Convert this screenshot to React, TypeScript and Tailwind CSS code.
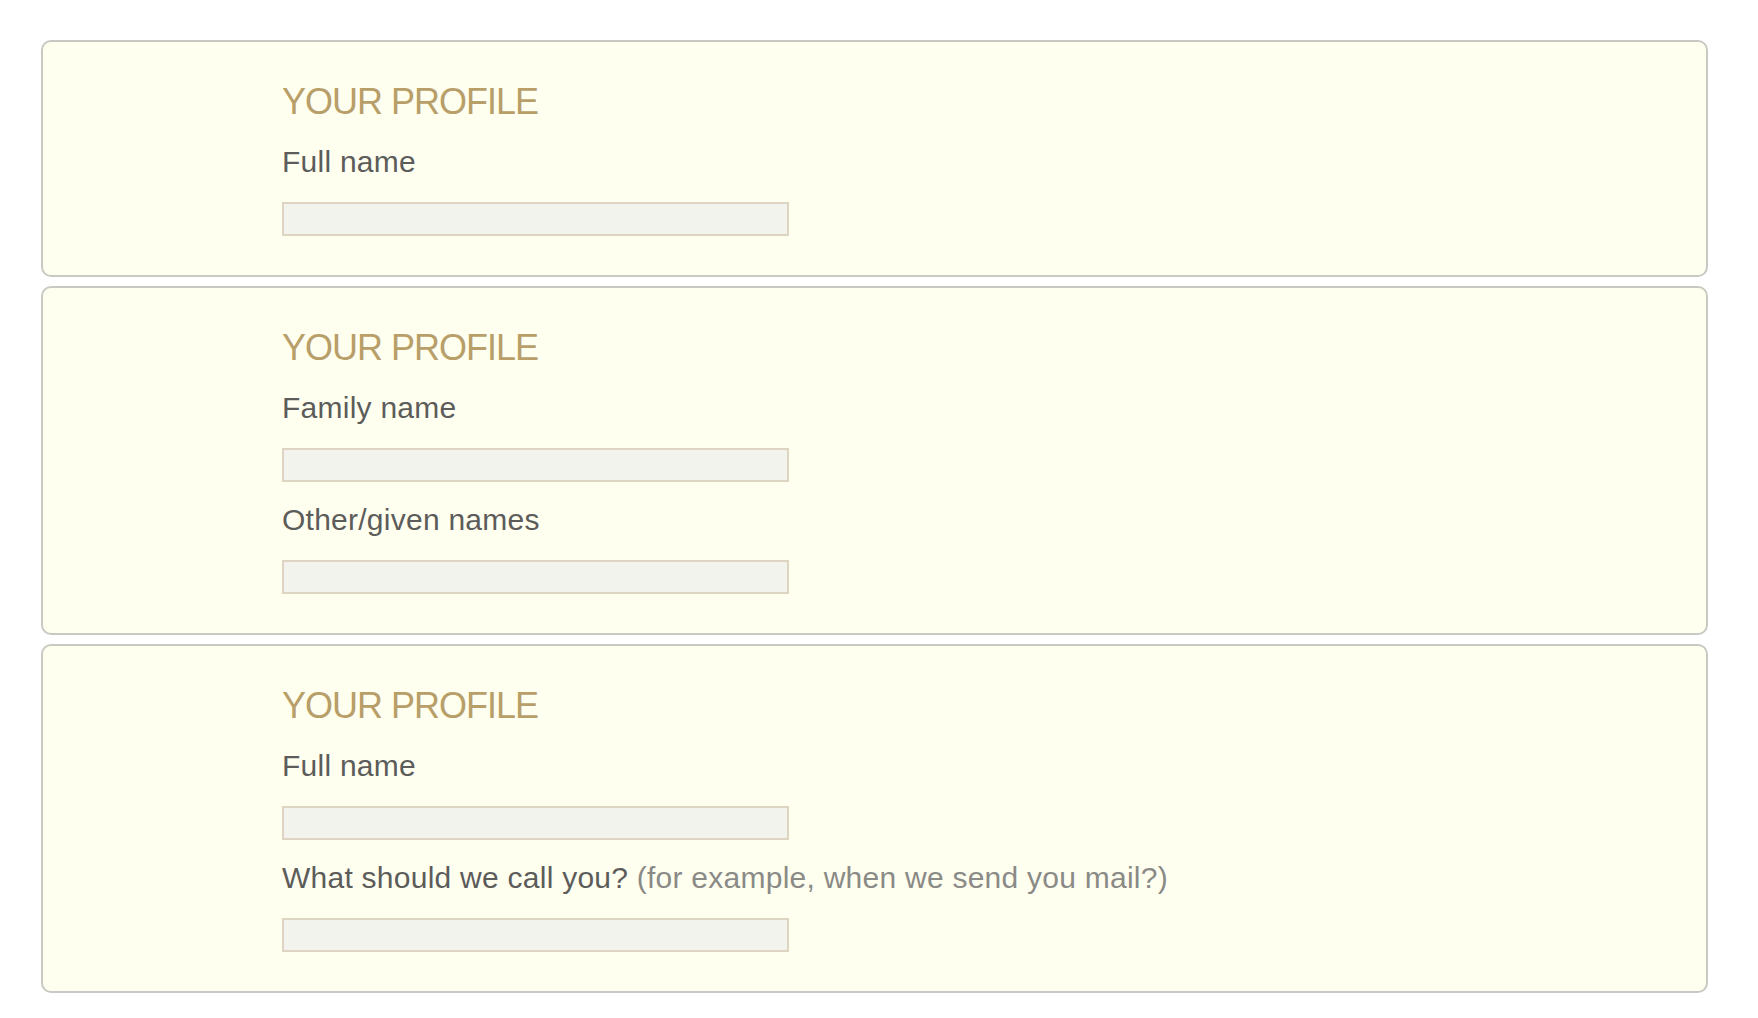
type Field = { label: string; hint?: string };

const cards: Field[][] = [
  [{ label: "Full name" }],
  [{ label: "Family name" }, { label: "Other/given names" }],
  [
    { label: "Full name" },
    { label: "What should we call you?", hint: "(for example, when we send you mail?)" },
  ],
];

function ProfileCard({ fields }: { fields: Field[] }) {
  return (
    <section className="w-[1667px] rounded-[10px] border-2 border-[#c9c9c3] bg-[#fffff0] pt-[40px] pb-[39px] pl-[239px]">
      <h2 className="text-[36px] leading-[40px] tracking-[-1px] text-[#b89e68]">YOUR PROFILE</h2>
      {fields.map((f, i) => (
        <div key={i}>
          <label
            className={`block text-[30px] leading-[34px] tracking-[0.25px] text-[#5c5c5a] ${i === 0 ? "mt-[23px]" : "mt-[21px]"}`}
          >
            {f.label}
            {f.hint && <span className="text-[#8a8a86]"> {f.hint}</span>}
          </label>
          <input
            type="text"
            className="mt-[23px] block h-[34px] w-[507px] border-2 border-[#ddd4c1] bg-[#f2f3ec] outline-none"
          />
        </div>
      ))}
    </section>
  );
}

export default function App() {
  return (
    <div className="min-h-[1018px] bg-white pt-[40px] pl-[41px] font-['Liberation_Sans',Arial,sans-serif]">
      <div className="flex flex-col gap-[9px]">
        {cards.map((fields, i) => (
          <ProfileCard key={i} fields={fields} />
        ))}
      </div>
    </div>
  );
}
